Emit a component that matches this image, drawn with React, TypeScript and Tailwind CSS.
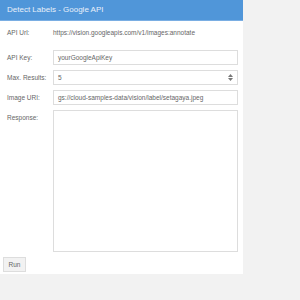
import React from "react";

export default function App() {
  const font = { fontFamily: '"Liberation Sans", Arial, sans-serif' };
  return (
    <div className="w-[300px] h-[300px] bg-[#f2f2f2]" style={font}>
      <div className="w-[243px] h-[274px] bg-white flex flex-col">
        <div className="h-[21px] bg-[#5096d9] border-b border-[#7aaee3] flex items-center pl-[7px] text-[8px] text-[#e8f0fa]">
          Detect Labels - Google API
        </div>
        <div className="flex items-center h-[24px] pl-[7px] text-[6.5px] text-[#666]">
          <div className="w-[46px]">API Url:</div>
          <div>https://vision.googleapis.com/v1/images:annotate</div>
        </div>
        <div className="flex flex-col gap-[5px] pt-[5px] pl-[7px] pr-[5px] text-[6.5px] text-[#666]">
          <div className="flex items-center h-[15px]">
            <div className="w-[46px]">API Key:</div>
            <div className="flex-1 h-full border border-[#ddd] flex items-center px-[4px]">yourGoogleApiKey</div>
          </div>
          <div className="flex items-center h-[15px]">
            <div className="w-[46px]">Max. Results:</div>
            <div className="flex-1 h-full border border-[#ddd] flex items-center px-[4px] justify-between">
              <span>5</span>
              <span className="flex flex-col items-center gap-[1px]">
                <svg width="5" height="3" viewBox="0 0 5 3"><path d="M0 3 L2.5 0 L5 3Z" fill="#777" /></svg>
                <svg width="5" height="3" viewBox="0 0 5 3"><path d="M0 0 L2.5 3 L5 0Z" fill="#777" /></svg>
              </span>
            </div>
          </div>
          <div className="flex items-center h-[15px]">
            <div className="w-[46px]">Image URI:</div>
            <div className="flex-1 h-full border border-[#ddd] flex items-center px-[4px]">gs://cloud-samples-data/vision/label/setagaya.jpeg</div>
          </div>
          <div className="flex items-start h-[142px]">
            <div className="w-[46px] pt-[3px]">Response:</div>
            <div className="flex-1 h-full border border-[#ddd]"></div>
          </div>
        </div>
        <div className="pl-[3px] pt-[5px]">
          <div className="w-[23px] h-[15px] bg-[#f2f2f2] border border-[#ddd] flex items-center justify-center text-[6.5px] text-[#666]">Run</div>
        </div>
      </div>
    </div>
  );
}
